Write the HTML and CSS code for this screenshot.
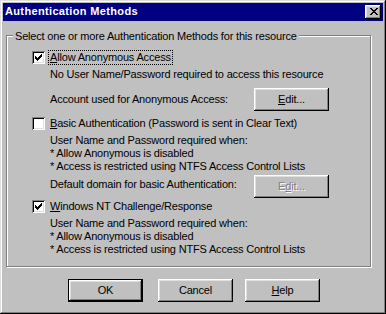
FILE: index.html
```html
<!DOCTYPE html>
<html>
<head>
<meta charset="utf-8">
<title>Authentication Methods</title>
<link rel="stylesheet" href="styles.css">
</head>
<body>
<div class="window">
  <div class="titlebar">
    <span class="title">Authentication Methods</span>
    <div class="close">
      <svg width="8" height="7" viewBox="0 0 8 7" shape-rendering="crispEdges"><path fill="#000" d="M0 0h2v1H0zM6 0h2v1H6zM1 1h2v1H1zM5 1h2v1H5zM2 2h4v1H2zM3 3h2v1H3zM2 4h4v1H2zM1 5h2v1H1zM5 5h2v1H5zM0 6h2v1H0zM6 6h2v1H6z"/></svg>
    </div>
  </div>

  <div class="group">
    <div class="legend">Select one or more Authentication Methods for this resource</div>

    <div class="option opt-first">
      <span class="check"><svg width="7" height="7" viewBox="0 0 7 7" shape-rendering="crispEdges"><path fill="#000" d="M6 0h1v1H6zM5 1h2v1H5zM0 2h1v1H0zM4 2h3v1H4zM0 3h2v1H0zM3 3h3v1H3zM0 4h5v1H0zM1 5h3v1H1zM2 6h1v1H2z"/></svg></span>
      <span class="label focus"><u>A</u>llow Anonymous Access</span>
    </div>
    <div class="desc desc-first">No User Name/Password required to access this resource</div>
    <div class="field field-account">
      <span class="field-label">Account used for Anonymous Access:</span>
      <div class="btn"><span><u>E</u>dit...</span></div>
    </div>

    <div class="option opt-second">
      <span class="check"></span>
      <span class="label"><u>B</u>asic Authentication (Password is sent in Clear Text)</span>
    </div>
    <div class="desc desc-first">User Name and Password required when:</div>
    <div class="desc">* Allow Anonymous is disabled</div>
    <div class="desc">* Access is restricted using NTFS Access Control Lists</div>
    <div class="field field-domain">
      <span class="field-label">Default domain for basic Authentication:</span>
      <div class="btn disabled"><span>E<u>d</u>it...</span></div>
    </div>

    <div class="option opt-third">
      <span class="check"><svg width="7" height="7" viewBox="0 0 7 7" shape-rendering="crispEdges"><path fill="#000" d="M6 0h1v1H6zM5 1h2v1H5zM0 2h1v1H0zM4 2h3v1H4zM0 3h2v1H0zM3 3h3v1H3zM0 4h5v1H0zM1 5h3v1H1zM2 6h1v1H2z"/></svg></span>
      <span class="label"><u>W</u>indows NT Challenge/Response</span>
    </div>
    <div class="desc desc-first">User Name and Password required when:</div>
    <div class="desc">* Allow Anonymous is disabled</div>
    <div class="desc">* Access is restricted using NTFS Access Control Lists</div>
  </div>

  <div class="buttons">
    <div class="btn default"><span>OK</span></div>
    <div class="btn btn-cancel"><span>Cancel</span></div>
    <div class="btn btn-help"><span><u>H</u>elp</span></div>
  </div>
</div>
</body>
</html>
```

FILE: styles.css
```css
* {
  box-sizing: border-box;
}

html,
body {
  margin: 0;
  padding: 0;
}

body {
  width: 386px;
  height: 314px;
  overflow: hidden;
  background: #c0c0c0;
  font-family: "Liberation Sans", Arial, sans-serif;
  font-size: 11px;
  line-height: 13px;
  letter-spacing: -0.18px;
  color: #000;
}

u {
  text-decoration: underline;
  text-underline-offset: 1px;
}

.window {
  width: 386px;
  height: 314px;
  padding: 3px;
  background: #c0c0c0;
  box-shadow:
    inset -1px -1px 0 #000,
    inset 1px 1px 0 #dfdfdf,
    inset -2px -2px 0 #808080,
    inset 2px 2px 0 #fff;
}

.titlebar {
  display: flex;
  align-items: flex-start;
  height: 18px;
  padding-left: 2px;
  background: #000080;
}

.title {
  margin-top: 2px;
  color: #fff;
  font-weight: bold;
  letter-spacing: 0.35px;
}

.close {
  display: flex;
  align-items: flex-start;
  width: 16px;
  height: 14px;
  margin: 2px 2px 0 auto;
  padding: 3px 0 0 5px;
  background: #c0c0c0;
  box-shadow:
    inset -1px -1px 0 #000,
    inset 1px 1px 0 #fff,
    inset -2px -2px 0 #808080,
    inset 2px 2px 0 #dfdfdf;
}

.close svg,
.check svg {
  display: block;
}

.group {
  width: 365px;
  margin: 14px 0 0 3px;
  padding: 0 0 10px 0;
  border: 1px solid #808080;
  box-shadow:
    1px 1px 0 #fff,
    inset 1px 1px 0 #fff;
}

.legend {
  width: fit-content;
  margin: -6px 0 0 6px;
  padding: 0 2px;
  background: #c0c0c0;
}

.option {
  display: flex;
  align-items: flex-start;
  padding-left: 25px;
}

.opt-first {
  margin-top: 7px;
}

.opt-second {
  margin-top: 5px;
}

.opt-third {
  margin-top: 1px;
}

.check {
  display: block;
  flex: none;
  width: 13px;
  height: 13px;
  margin-top: 1px;
  padding: 3px 0 0 3px;
  background: #fff;
  box-shadow:
    inset 1px 1px 0 #808080,
    inset -1px -1px 0 #fff,
    inset 2px 2px 0 #000,
    inset -2px -2px 0 #dfdfdf;
}

.label {
  margin-left: 3px;
  padding: 0 1px;
  border: 1px dotted transparent;
}

.label.focus {
  border-color: #000;
}

.desc {
  padding-left: 43px;
}

.desc-first {
  margin-top: 3px;
}

.field {
  display: flex;
  align-items: flex-start;
  padding-left: 43px;
}

.field-label {
  width: 204px;
}

.field-account {
  margin-top: 7px;
}

.field-account .field-label {
  margin-top: 5px;
}

.field-domain {
  margin-top: 2px;
}

.field-domain .field-label {
  margin-top: 3px;
}

.btn {
  display: flex;
  align-items: center;
  justify-content: center;
  flex: none;
  width: 75px;
  height: 23px;
  padding-bottom: 1px;
  background: #c0c0c0;
  color: #000;
  box-shadow:
    inset -1px -1px 0 #000,
    inset 1px 1px 0 #fff,
    inset -2px -2px 0 #808080,
    inset 2px 2px 0 #dfdfdf;
}

.btn.disabled {
  color: #808080;
  text-shadow: 1px 1px 0 #fff;
}

.btn.default {
  box-shadow:
    inset 0 0 0 1px #000,
    inset -2px -2px 0 #000,
    inset 2px 2px 0 #fff,
    inset -3px -3px 0 #808080,
    inset 3px 3px 0 #dfdfdf;
}

.buttons {
  display: flex;
  margin-top: 12px;
  padding-left: 65px;
}

.btn-cancel {
  margin-left: 15px;
}

.btn-help {
  margin-left: 12px;
}
```
